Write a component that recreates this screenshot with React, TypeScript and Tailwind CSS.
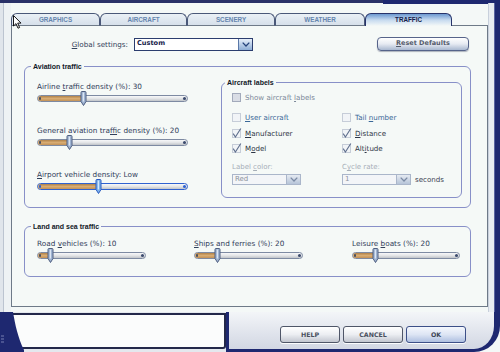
import React from "react";

const sans = "font-['DejaVu_Sans',sans-serif]";
const lib = "font-['Liberation_Sans',Arial,sans-serif]";

function U({ children }: { children: React.ReactNode }) {
  return <span className="underline underline-offset-[1px] decoration-[0.7px]">{children}</span>;
}

function Slider({ className, frac, focused = false }: { className: string; frac: number; focused?: boolean }) {
  const pos = `calc(${frac} * (100% - 6px) + 3px)`;
  return (
    <div className={`relative h-[14px] ${className}`}>
      <div
        className={`relative mt-[4px] h-[7px] w-full overflow-hidden rounded-full border ${
          focused ? "border-[#2f62d0]" : "border-[#7d8aa2]"
        } bg-gradient-to-b from-[#f7f8f9] via-[#e3e5e7] to-[#c0c4c9]`}
      >
        <div className="h-full bg-gradient-to-b from-[#b0824a] via-[#d8ac72] to-[#c29259]" style={{ width: pos }} />
        <div className={`absolute left-[1px] top-[1px] h-[3px] w-[2px] rounded-[1px] ${focused ? "bg-[#2f62d0]" : "bg-[#4a5060]"}`} />
        <div className={`absolute right-[1px] top-[1px] h-[3px] w-[3px] rounded-full ${focused ? "bg-[#2f62d0]" : "bg-[#3c4c6e]"}`} />
      </div>
      <svg
        className="absolute top-0"
        style={{ left: `calc(${frac} * (100% - 6px) + 3px - 3.5px)` }}
        width="7"
        height="15"
        viewBox="0 0 7 15"
      >
        <path
          d="M1 1.5 Q1 0.5 2 0.5 H5 Q6 0.5 6 1.5 V10.5 L3.5 14.5 L1 10.5 Z"
          fill={focused ? "#7fb2ea" : "#9fb4d2"}
          stroke={focused ? "#2a5cc0" : "#4f5f80"}
          strokeWidth="1"
        />
        <rect x="2.8" y="1.5" width="1.2" height="9" fill={focused ? "#d4e8fc" : "#dce6f4"} />
      </svg>
    </div>
  );
}

function Check({ checked = false, disabled = false }: { checked?: boolean; disabled?: boolean }) {
  return (
    <svg width="9" height="9" viewBox="0 0 9 9" className="shrink-0 overflow-visible">
      <rect
        x="0.5"
        y="0.5"
        width="8"
        height="8"
        fill={disabled ? "#d9dde5" : "#f1f4f7"}
        stroke={disabled ? "#a2aabb" : "#c6cdd8"}
      />
      {checked && <path d="M1.2 4.6 L3.4 8 L8.8 -0.5" fill="none" stroke="#5f6f8d" strokeWidth="1.1" />}
    </svg>
  );
}

function CheckRow({
  checked,
  disabled,
  color,
  children,
}: {
  checked?: boolean;
  disabled?: boolean;
  color: string;
  children: React.ReactNode;
}) {
  return (
    <div className="flex h-[9px] items-center gap-[4px]">
      <Check checked={checked} disabled={disabled} />
      <span className={`text-[7.1px] leading-[9px] whitespace-nowrap ${color}`}>{children}</span>
    </div>
  );
}

function DropSelect({ className, text, disabled = false }: { className: string; text: string; disabled?: boolean }) {
  return (
    <div
      className={`flex ${className} border ${
        disabled ? "border-[#aab6ca] bg-[#f3f5f8]" : "border-[#2b3d6e] bg-white"
      }`}
    >
      <div
        className={`flex flex-1 items-center pl-[2px] ${
          disabled ? "text-[7px] text-[#8c939c]" : "text-[6.6px] font-bold text-[#16224a]"
        }`}
      >
        {text}
      </div>
      <div
        className={`flex w-[14px] items-center justify-center border-l ${
          disabled
            ? "border-[#aab6ca] bg-gradient-to-b from-[#e6ebf2] to-[#b6c4d8]"
            : "border-[#5a78a8] bg-gradient-to-b from-[#e8f0fa] to-[#8eaed6]"
        }`}
      >
        <svg width="8" height="5" viewBox="0 0 8 5">
          <path d="M0.7 0.6 L4 4 L7.3 0.6" fill="none" stroke={disabled ? "#7a8aa4" : "#24427a"} strokeWidth="1.3" />
        </svg>
      </div>
    </div>
  );
}

function Tab({ w, label, active = false }: { w: string; label: string; active?: boolean }) {
  if (active) {
    return (
      <div
        className={`${w} flex items-center justify-center rounded-t-[6px] border border-b-0 border-[#27336a] bg-gradient-to-b from-[#6d99d0] via-[#c6daef] to-[#f5f9f7] text-[6.3px] font-bold text-[#14204a] ${lib}`}
      >
        {label}
      </div>
    );
  }
  return (
    <div
      className={`${w} flex items-center justify-center rounded-t-[6px] border border-[#4a5878] border-b-[#6e7a88] bg-gradient-to-b from-[#eaf0f6] to-[#d6e0ea] text-[6.3px] font-bold text-[#6585ae] ${lib}`}
    >
      {label}
    </div>
  );
}

function Legend({ children, ml }: { children: React.ReactNode; ml: string }) {
  return (
    <legend className={`${ml} px-[2px] text-[7px] leading-[9px] font-bold text-[#111827] ${lib}`}>{children}</legend>
  );
}

function SliderBlock({
  label,
  frac,
  w,
  focused,
}: {
  label: React.ReactNode;
  frac: number;
  w: string;
  focused?: boolean;
}) {
  return (
    <div className="flex flex-col">
      <div className="h-[9px] text-[7.3px] leading-[9px] whitespace-nowrap text-[#31405a]">{label}</div>
      <Slider className={w} frac={frac} focused={focused} />
    </div>
  );
}

function Btn({ children, ok = false }: { children: React.ReactNode; ok?: boolean }) {
  return (
    <div
      className={`flex h-[17px] w-[60px] items-center justify-center rounded-[3px] border text-[6.3px] font-bold ${
        ok
          ? "border-[#3c4f88] bg-gradient-to-b from-[#f4f7fd] via-[#dde5f4] to-[#aebfe0] text-[#3e4658]"
          : "border-[#4f5668] bg-gradient-to-b from-[#ffffff] via-[#eceef2] to-[#c2c6d0] text-[#4a505e]"
      } shadow-[0_1px_0_rgba(255,255,255,0.9)]`}
    >
      {children}
    </div>
  );
}

export default function App() {
  return (
    <div className={`relative flex h-[352px] w-[500px] flex-col overflow-hidden bg-[#f4f8f7] ${sans}`}>
      <div className="flex h-[3px] shrink-0">
        <div className="flex-1 bg-[#2a3168]" />
        <div className="h-[4px] w-[117px] bg-[#1e2870]" />
      </div>
      <div className="flex min-h-0 flex-1">
        {/* left gutter */}
        <div className="flex w-[11px] shrink-0">
          <div className="w-[3px] bg-[#e0e5eb]" />
          <div className="w-[1px] bg-[#bcc4d0]" />
          <div className="flex-1 bg-[#eef2f4]" />
        </div>

        {/* main content */}
        <div className="flex w-[477px] shrink-0 flex-col pt-[10px]">
          <div className="flex h-[13px] shrink-0">
            <Tab w="w-[89px]" label="GRAPHICS" />
            <Tab w="w-[87px]" label="AIRCRAFT" />
            <Tab w="w-[88px]" label="SCENERY" />
            <Tab w="w-[90px]" label="WEATHER" />
            <Tab w="w-[87px]" label="TRAFFIC" active />
            <div className="flex-1 border-b border-[#6e7a88]" />
          </div>

          <div className="flex h-[281px] shrink-0 flex-col border-x border-b border-[#6e7a88] bg-[#f5f9f7]">
            {/* global settings row */}
            <div className="mt-[11px] flex h-[14px] items-center">
              <div className="w-[116px] text-right text-[7.2px] leading-[9px] text-[#33425a]">
                <U>G</U>lobal settings:
              </div>
              <DropSelect className="ml-[6px] h-[13px] w-[119px]" text="Custom" />
              <div className="ml-auto mr-[18px] flex h-[14px] w-[92px] items-center justify-center rounded-[4px] border border-[#56648a] bg-gradient-to-b from-[#ffffff] via-[#e6eaf2] to-[#a9b8d0] text-[6.5px] font-bold text-[#555c6c] shadow-[0_1px_1px_rgba(40,50,80,0.35)]">
                <U>R</U>eset Defaults
              </div>
            </div>

            {/* Aviation traffic */}
            <fieldset className="ml-[12px] mt-[11px] h-[146px] w-[447px] rounded-[6px] border border-[#8890c8]">
              <Legend ml="ml-[6px]">Aviation traffic</Legend>
              <div className="flex pl-[12px]">
                <div className="flex w-[151px] flex-col gap-[21px] pt-[11px]">
                  <SliderBlock
                    label={
                      <>
                        Airline <U>t</U>raffic density (%): 30
                      </>
                    }
                    frac={0.3}
                    w="w-[151px]"
                  />
                  <SliderBlock
                    label={
                      <>
                        General aviation tra<U>f</U>fic density (%): 20
                      </>
                    }
                    frac={0.2}
                    w="w-[151px]"
                  />
                  <SliderBlock
                    label={
                      <>
                        <U>A</U>irport vehicle density: Low
                      </>
                    }
                    frac={0.4}
                    w="w-[151px]"
                    focused
                  />
                </div>

                <fieldset className="ml-[33px] mt-[7px] h-[120px] w-[241px] rounded-[6px] border border-[#8890c8]">
                  <Legend ml="ml-[3px]">Aircraft labels</Legend>
                  <div className="flex flex-col pl-[10px] pt-[6px]">
                    <CheckRow disabled color="text-[#7b8899]">
                      Show aircraft <U>l</U>abels
                    </CheckRow>
                    <div className="mt-[11px] grid grid-cols-[110px_1fr] gap-y-[7px]">
                      <CheckRow color="text-[#3a6898]">
                        <U>U</U>ser aircraft
                      </CheckRow>
                      <CheckRow color="text-[#3a6898]">
                        Tail <U>n</U>umber
                      </CheckRow>
                      <CheckRow checked color="text-[#2e3646]">
                        <U>M</U>anufacturer
                      </CheckRow>
                      <CheckRow checked color="text-[#2e3646]">
                        <U>D</U>istance
                      </CheckRow>
                    </div>
                    <div className="mt-[6px] grid grid-cols-[110px_1fr]">
                      <CheckRow checked color="text-[#2e3646]">
                        M<U>o</U>del
                      </CheckRow>
                      <CheckRow checked color="text-[#2e3646]">
                        Alt<U>i</U>tude
                      </CheckRow>
                    </div>
                    <div className="mt-[10px] grid grid-cols-[110px_1fr]">
                      <div className="flex flex-col">
                        <div className="h-[9px] text-[7px] leading-[9px] text-[#a6aeb8]">
                          Label <U>c</U>olor:
                        </div>
                        <DropSelect className="mt-[2px] h-[11px] w-[69px]" text="Red" disabled />
                      </div>
                      <div className="flex flex-col">
                        <div className="h-[9px] text-[7px] leading-[9px] text-[#a6aeb8]">
                          C<U>y</U>cle rate:
                        </div>
                        <div className="mt-[2px] flex items-center">
                          <DropSelect className="h-[11px] w-[69px]" text="1" disabled />
                          <span className="ml-[4px] text-[7.1px] leading-[9px] text-[#3c4454]">seconds</span>
                        </div>
                      </div>
                    </div>
                  </div>
                </fieldset>
              </div>
            </fieldset>

            {/* Land and sea traffic */}
            <fieldset className="ml-[12px] mt-[14px] h-[55px] w-[447px] rounded-[6px] border border-[#8890c8]">
              <Legend ml="ml-[6px]">Land and sea traffic</Legend>
              <div className="grid grid-cols-[157px_158px_1fr] pl-[12px] pt-[8px]">
                <SliderBlock
                  label={
                    <>
                      Road <U>v</U>ehicles (%): 10
                    </>
                  }
                  frac={0.1}
                  w="w-[109px]"
                />
                <SliderBlock
                  label={
                    <>
                      <U>S</U>hips and ferries (%): 20
                    </>
                  }
                  frac={0.2}
                  w="w-[109px]"
                />
                <SliderBlock
                  label={
                    <>
                      Leisure <U>b</U>oats (%): 20
                    </>
                  }
                  frac={0.2}
                  w="w-[108px]"
                />
              </div>
            </fieldset>
          </div>
        </div>

        {/* right gutters */}
        <div className="w-[6px] shrink-0 border-l border-[#c8d0dc] bg-[#e8ecf1]" />
        <div className="w-[6px] shrink-0 border-l border-[#5a64a0] bg-[#1e2870]" />
      </div>

      {/* bottom bar */}
      <div className="flex h-[40px] shrink-0">
        <div className="relative w-[226px] shrink-0 bg-[#e4e8ee]">
          <div className="ml-[12px] mt-[1px] h-[36px] w-[214px] rounded-br-[3px] border-y-2 border-r-2 border-[#23284a] bg-[#fbfcfc]" />
          <svg className="absolute left-0 top-0" width="26" height="40" viewBox="0 0 26 40">
            <path d="M0 0 H13 C15 12 18 26 24 38 L24 40 H0 Z" fill="#1e2870" />
            <path d="M1 24 H4 M1 27 H4 M1 30 H4" stroke="#8d96c4" strokeWidth="0.8" />
          </svg>
        </div>
        <div className="flex flex-1 items-start gap-[3px] rounded-br-[26px] border-b-[3px] border-l-[3px] border-r-[6px] border-[#1e2870] bg-gradient-to-b from-[#f3f5f8] to-[#d2d7e3] pl-[51px] pt-[14px]">
          <Btn>HELP</Btn>
          <Btn>CANCEL</Btn>
          <Btn ok>OK</Btn>
        </div>
      </div>

      {/* mouse cursor */}
      <svg className="absolute left-[13px] top-[15px]" width="10" height="15" viewBox="0 0 10 15">
        <path d="M0.5 0.5 V11 L3 8.6 L5 13.2 L6.6 12.5 L4.7 8.1 H8 Z" fill="#ffffff" stroke="#000000" strokeWidth="0.9" />
      </svg>
    </div>
  );
}
